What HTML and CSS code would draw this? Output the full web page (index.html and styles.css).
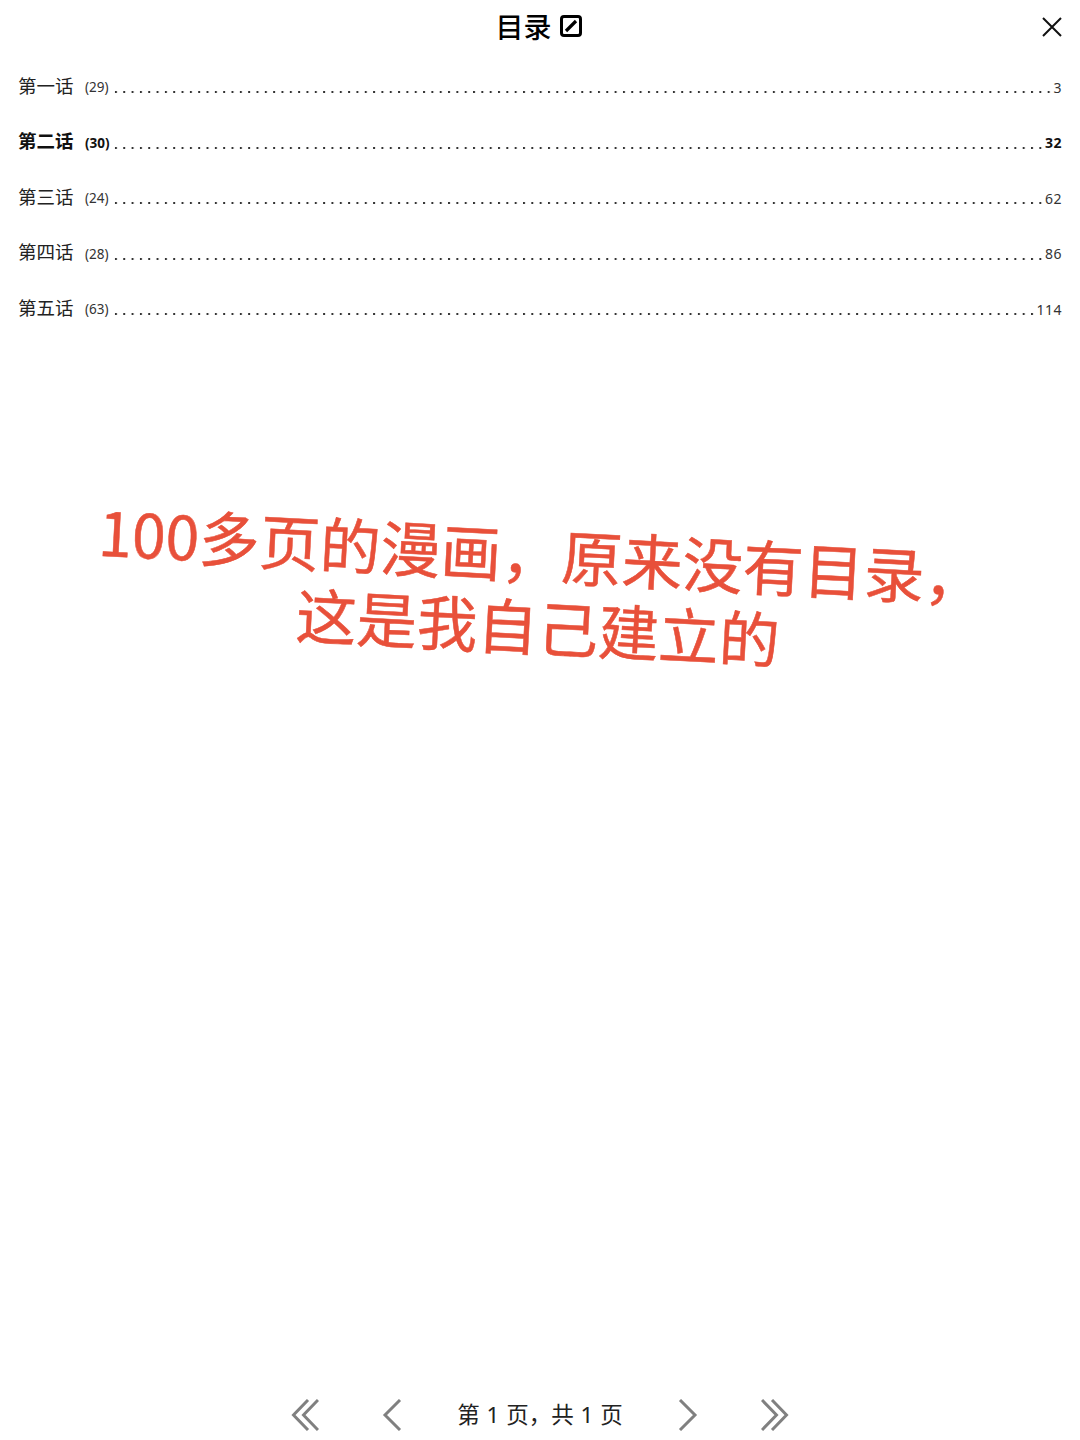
FILE: index.html
```html
<!DOCTYPE html>
<html lang="zh">
<head>
<meta charset="utf-8">
<title>目录</title>
<link rel="stylesheet" href="styles.css">
</head>
<body>
<div class="page">
  <header class="top">
    <div class="heading">
      <span>目录</span>
      <svg class="edit" viewBox="0 0 22 22" aria-hidden="true">
        <rect x="1.5" y="1.5" width="19" height="19" rx="2.5" fill="none" stroke="#000" stroke-width="3"/>
        <path d="M6 16L16 6" fill="none" stroke="#000" stroke-width="3.2"/>
      </svg>
    </div>
    <svg class="close" viewBox="0 0 20 20" aria-hidden="true">
      <path d="M1 1l18 18M19 1L1 19" fill="none" stroke="#111" stroke-width="2"/>
    </svg>
  </header>
  <ul class="toc">
    <li class="row"><span class="name">第一话</span><span class="count">(29)</span><span class="leader"></span><span class="num">3</span></li>
    <li class="row current"><span class="name">第二话</span><span class="count">(30)</span><span class="leader"></span><span class="num">32</span></li>
    <li class="row"><span class="name">第三话</span><span class="count">(24)</span><span class="leader"></span><span class="num">62</span></li>
    <li class="row"><span class="name">第四话</span><span class="count">(28)</span><span class="leader"></span><span class="num">86</span></li>
    <li class="row"><span class="name">第五话</span><span class="count">(63)</span><span class="leader"></span><span class="num">114</span></li>
  </ul>
  <main class="note">
    <p class="note-text">100多页的漫画，原来没有目录，<br>这是我自己建立的</p>
  </main>
  <footer class="pager">
    <svg class="arrow double" viewBox="0 0 28 32" aria-hidden="true">
      <path d="M17 1L2.500 16 17 31M27 1L12.500 16 27 31" fill="none" stroke="#808080" stroke-width="3"/>
    </svg>
    <svg class="arrow single" viewBox="0 0 20 32" aria-hidden="true">
      <path d="M18 1L3 16l15 15" fill="none" stroke="#808080" stroke-width="3"/>
    </svg>
    <span class="page-label">第 1 页，共 1 页</span>
    <svg class="arrow single" viewBox="0 0 20 32" aria-hidden="true">
      <path d="M2 1l15 15L2 31" fill="none" stroke="#808080" stroke-width="3"/>
    </svg>
    <svg class="arrow double" viewBox="0 0 28 32" aria-hidden="true">
      <path d="M1 1l14.500 15L1 31M11 1l14.500 15L11 31" fill="none" stroke="#808080" stroke-width="3"/>
    </svg>
  </footer>
</div>
</body>
</html>
```
FILE: styles.css
```css
* { box-sizing: border-box; }
html, body { margin: 0; padding: 0; background: #fff; }
body { font-family: "Noto Sans", "Noto Sans CJK SC", sans-serif; color: #222; }
.page { width: 1080px; height: 1440px; display: flex; flex-direction: column; overflow: hidden; }

.top { height: 58px; position: relative; display: flex; justify-content: center; align-items: center; padding: 0 3px 6px 0; }
.heading { display: flex; align-items: center; gap: 8px; font-family: "Noto Sans CJK SC", sans-serif; font-size: 28px; font-weight: 500; color: #000; line-height: 1; }
.edit { width: 22px; height: 22px; }
.close { position: absolute; right: 18px; top: 17px; width: 20px; height: 20px; }

.toc { list-style: none; margin: 0; padding: 0 18px; }
.row { display: flex; align-items: center; height: 55.5px; font-size: 14px; color: #333; }
.name { font-family: "Noto Sans CJK SC", sans-serif; font-size: 18.500px; width: 67px; color: #222; margin-top: -2px; }
.count { width: 29px; padding-top: 3px; font-size: 13.500px; white-space: nowrap; }
.leader { flex: 1; height: 4px; margin: 13px 2px 0 0; background: radial-gradient(circle at 2px 2px, #333 0.900px, transparent 1.400px) repeat-x left center / 8.330px 4px; }
.num { padding-top: 3px; letter-spacing: 0.5px; }
.current .name, .current .count, .current .num { font-weight: 700; color: #111; }

.note { flex: 1; position: relative; }
.note-text { margin: 0; position: absolute; left: 60px; right: 60px; top: 181px; text-align: center; font-family: "Noto Sans CJK SC", sans-serif; font-size: 60.500px; line-height: 72px; color: #e8503a; -webkit-text-stroke: 0.5px #e8503a; transform: rotate(3deg); white-space: nowrap; }

.pager { height: 70px; display: flex; justify-content: center; align-items: center; padding-top: 19px; }
.arrow { height: 32px; flex: none; }
.double { width: 28px; }
.single { width: 20px; }
.pager .double:first-child { margin-right: 63px; }
.pager .double:last-child { margin-left: 63px; }
.page-label { font-family: "Noto Sans", "Noto Sans CJK SC", sans-serif; font-size: 22.500px; line-height: 30px; color: #222; margin: 0 55px; white-space: pre; word-spacing: 1px; }
```
